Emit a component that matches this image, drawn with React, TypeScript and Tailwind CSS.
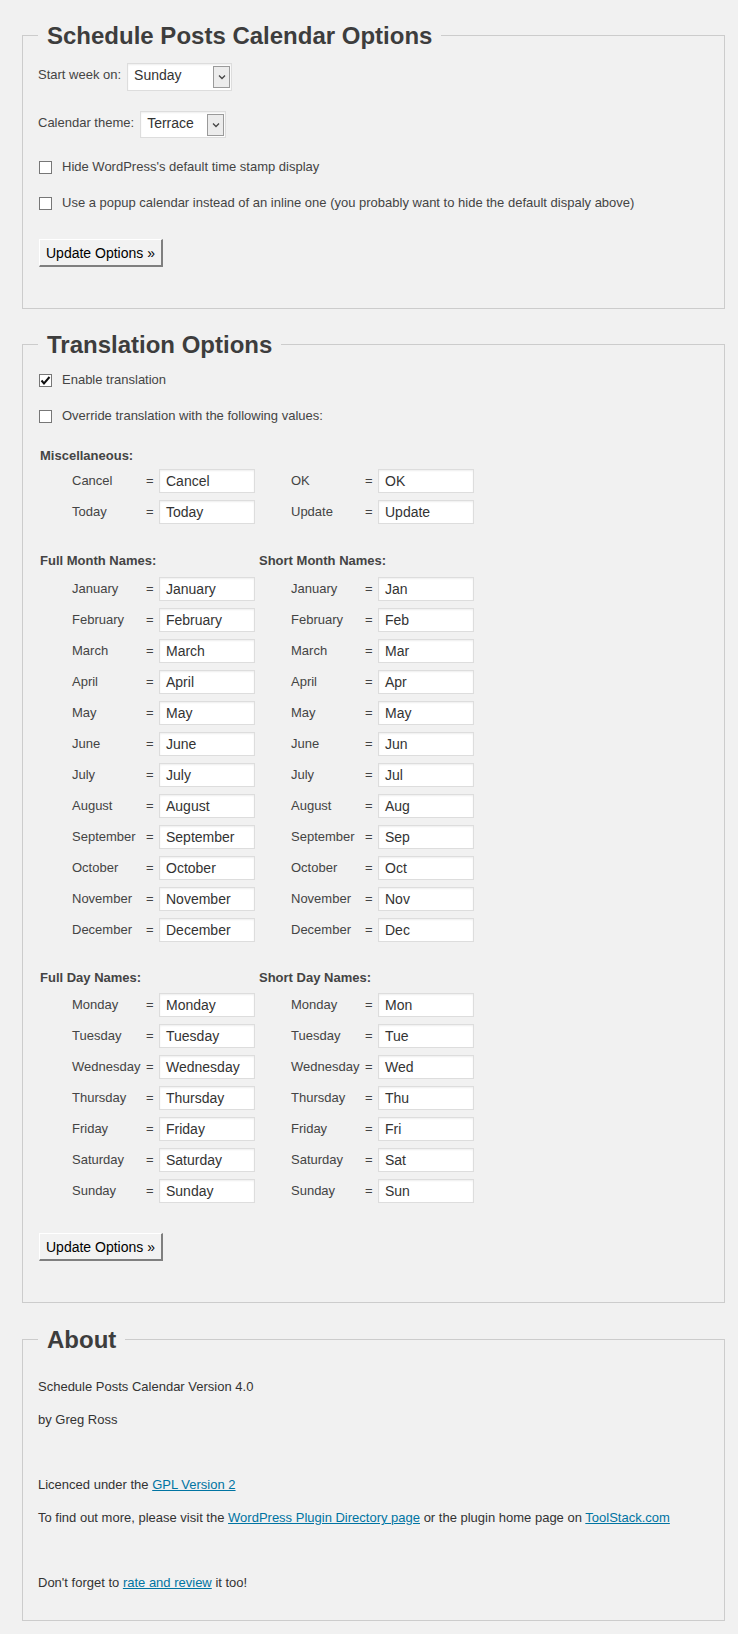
import React from "react";

const months = [
  ["January", "Jan"],
  ["February", "Feb"],
  ["March", "Mar"],
  ["April", "Apr"],
  ["May", "May"],
  ["June", "Jun"],
  ["July", "Jul"],
  ["August", "Aug"],
  ["September", "Sep"],
  ["October", "Oct"],
  ["November", "Nov"],
  ["December", "Dec"],
];

const days = [
  ["Monday", "Mon"],
  ["Tuesday", "Tue"],
  ["Wednesday", "Wed"],
  ["Thursday", "Thu"],
  ["Friday", "Fri"],
  ["Saturday", "Sat"],
  ["Sunday", "Sun"],
];

function Cell({ label, value }: { label: string; value: string }) {
  return (
    <div className="flex w-[215px] items-center pl-[32px]">
      <span className="w-[74px] text-[13px] leading-[16px] text-[#444]">{label}</span>
      <span className="w-[13px] text-[13px] leading-[16px] text-[#444]">=</span>
      <div className="flex h-[24px] w-[96px] items-center border border-[#ddd] bg-white pl-[6px] text-[14px] leading-[16px] text-[#333] shadow-[inset_0_1px_2px_rgba(0,0,0,0.07)]">
        {value}
      </div>
    </div>
  );
}

function Row({ a, b, c, d }: { a: string; b: string; c: string; d: string }) {
  return (
    <div className="flex gap-[4px]">
      <Cell label={a} value={b} />
      <Cell label={c} value={d} />
    </div>
  );
}

function Header({ left, right }: { left: string; right?: string }) {
  return (
    <div className="flex h-[16px] gap-[4px] text-[13px] font-bold leading-[16px] text-[#444]">
      <div className="w-[215px]">{left}</div>
      {right ? <div className="w-[215px]">{right}</div> : null}
    </div>
  );
}

function Checkbox({ checked, label }: { checked?: boolean; label: string }) {
  return (
    <div className="flex h-[20px] items-center">
      <div className="ml-[1px] flex h-[13px] w-[13px] items-center justify-center border border-[#777] bg-white">
        {checked ? (
          <svg width="11" height="11" viewBox="0 0 11 11">
            <polyline points="1.5,5.5 4,8.5 9.5,2" fill="none" stroke="#111" strokeWidth="2" />
          </svg>
        ) : null}
      </div>
      <span className="ml-[10px] text-[13px] leading-[16px] text-[#444]">{label}</span>
    </div>
  );
}

function Select({ value, w, h }: { value: string; w: string; h: string }) {
  return (
    <div className={`flex ${w} ${h} items-center justify-between border border-[#ddd] bg-white pl-[6px] pr-[1px] shadow-[inset_0_1px_2px_rgba(0,0,0,0.07)]`}>
      <span className="mb-[4px] text-[14px] leading-[16px] text-[#333]">{value}</span>
      <div className="flex h-[22px] w-[17px] items-center justify-center border border-[#9a9a9a] bg-[#ececec]">
        <svg width="8" height="6" viewBox="0 0 8 6">
          <polyline points="1,1.5 4,4.5 7,1.5" fill="none" stroke="#444" strokeWidth="1.3" />
        </svg>
      </div>
    </div>
  );
}

function UpdateButton({ className }: { className: string }) {
  return (
    <div className={`flex h-[28px] w-[124px] items-center border-t border-l border-t-white border-l-white border-r-2 border-b-2 border-r-[#7f7f7f] border-b-[#7f7f7f] bg-[#f2f2f2] pl-[6px] text-[14px] leading-[16px] text-black ${className}`}>
      Update Options »
    </div>
  );
}

function Legend({ children }: { children: React.ReactNode }) {
  return (
    <legend className="px-[9px] text-[24px] font-bold leading-[27px] text-[#3d3d3d]">{children}</legend>
  );
}

export default function App() {
  return (
    <div className="min-h-screen bg-[#f1f1f1] pb-[13px] pl-[22px] pr-[13px] pt-[22px] font-['Liberation_Sans',Arial,sans-serif]">
      <fieldset className="border border-[#ccc] px-[15px] pb-[41px]">
        <Legend>Schedule Posts Calendar Options</Legend>
        <div className="mt-[14px] flex h-[28px] items-start gap-[6px]">
          <span className="mt-[4px] text-[13px] leading-[16px] text-[#444]">Start week on:</span>
          <Select value="Sunday" w="w-[105px]" h="h-[28px]" />
        </div>
        <div className="mt-[20px] flex h-[27px] items-start gap-[6px]">
          <span className="mt-[4px] text-[13px] leading-[16px] text-[#444]">Calendar theme:</span>
          <Select value="Terrace" w="w-[86px]" h="h-[27px]" />
        </div>
        <div className="mt-[19px]">
          <Checkbox label="Hide WordPress's default time stamp display" />
        </div>
        <div className="mt-[16px]">
          <Checkbox label="Use a popup calendar instead of an inline one (you probably want to hide the default dispaly above)" />
        </div>
        <UpdateButton className="ml-[1px] mt-[26px]" />
      </fieldset>

      <fieldset className="mt-[22px] border border-[#ccc] px-[15px] pb-[41px]">
        <Legend>Translation Options</Legend>
        <div className="mt-[12px]">
          <Checkbox checked label="Enable translation" />
        </div>
        <div className="mt-[16px]">
          <Checkbox label="Override translation with the following values:" />
        </div>
        <div className="ml-[2px]">
          <div className="mt-[22px]">
            <Header left="Miscellaneous:" />
          </div>
          <div className="mt-[5px] flex flex-col gap-[7px]">
            <Row a="Cancel" b="Cancel" c="OK" d="OK" />
            <Row a="Today" b="Today" c="Update" d="Update" />
          </div>
          <div className="mt-[29px]">
            <Header left="Full Month Names:" right="Short Month Names:" />
          </div>
          <div className="mt-[8px] flex flex-col gap-[7px]">
            {months.map(([full, short]) => (
              <Row key={full} a={full} b={full} c={full} d={short} />
            ))}
          </div>
          <div className="mt-[28px]">
            <Header left="Full Day Names:" right="Short Day Names:" />
          </div>
          <div className="mt-[7px] flex flex-col gap-[7px]">
            {days.map(([full, short]) => (
              <Row key={full} a={full} b={full} c={full} d={short} />
            ))}
          </div>
        </div>
        <UpdateButton className="ml-[1px] mt-[30px]" />
      </fieldset>

      <fieldset className="mt-[23px] border border-[#ccc] px-[15px] pb-[27px]">
        <Legend>About</Legend>
        <div className="text-[13px] leading-[20px] text-[#333]">
          <p className="mt-[24px]">Schedule Posts Calendar Version 4.0</p>
          <p className="mt-[13px]">by Greg Ross</p>
          <p className="mt-[45px]">
            Licenced under the <a className="text-[#0074a2] underline">GPL Version 2</a>
          </p>
          <p className="mt-[13px]">
            To find out more, please visit the{" "}
            <a className="text-[#0074a2] underline">WordPress Plugin Directory page</a> or the plugin home page on{" "}
            <a className="text-[#0074a2] underline">ToolStack.com</a>
          </p>
          <p className="mt-[45px]">
            Don't forget to <a className="text-[#0074a2] underline">rate and review</a> it too!
          </p>
        </div>
      </fieldset>
    </div>
  );
}
